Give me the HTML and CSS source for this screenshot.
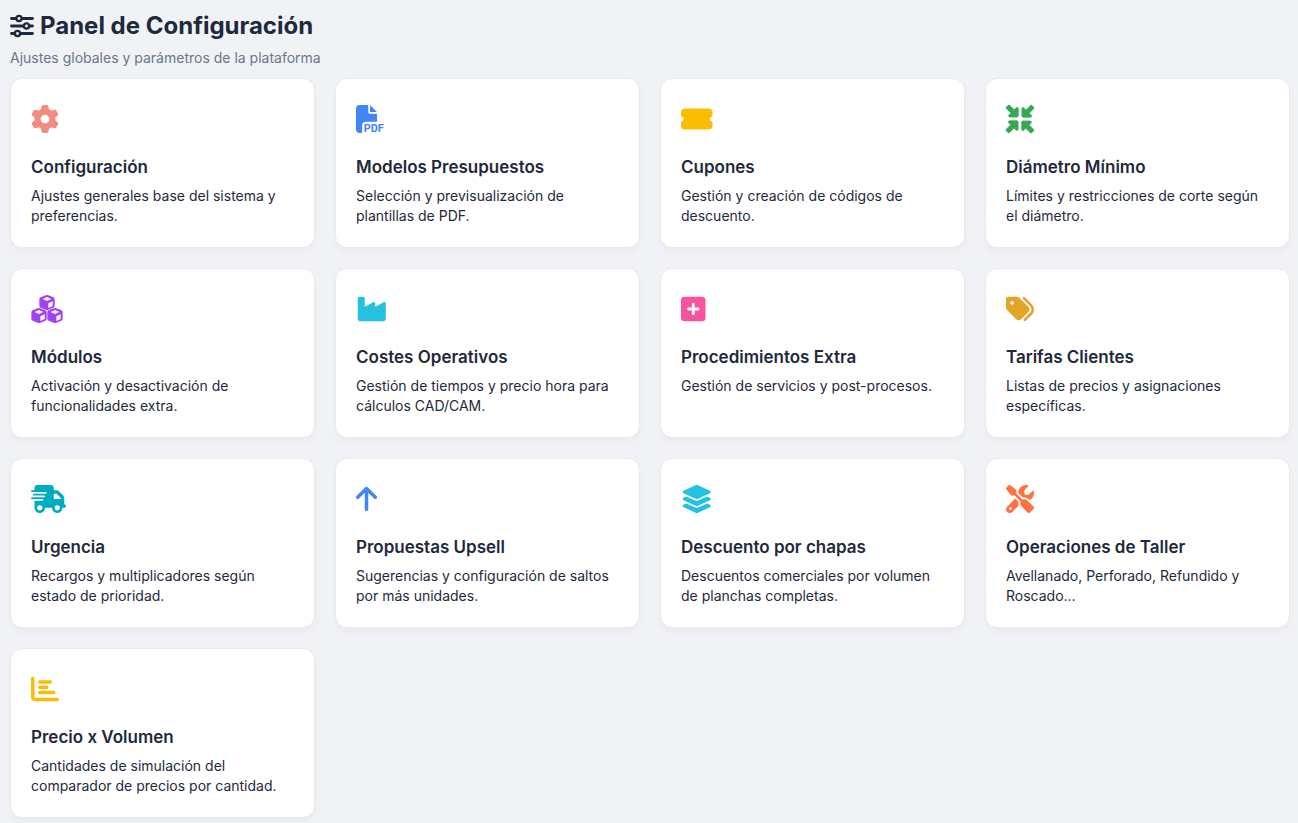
FILE: index.html
```html
<!DOCTYPE html>
<html lang="es">
<head>
<meta charset="utf-8">
<meta name="viewport" content="width=device-width, initial-scale=1">
<title>Panel de Configuración</title>
<link rel="stylesheet" href="styles.css">
</head>
<body>
<header class="page-header">
  <h1 class="page-title">
    <svg class="title-icon" viewBox="0 0 512 512" aria-hidden="true"><g fill="none" stroke="currentColor" stroke-linecap="round" stroke-width="60"><path d="M32 96h90M262 96h218M32 256h248M422 256h58M32 416h60M228 416h252"/><g stroke-width="50"><circle cx="192" cy="96" r="56"/><circle cx="352" cy="256" r="56"/><circle cx="160" cy="416" r="56"/></g></g></svg>
    <span>Panel de Configuración</span>
  </h1>
  <p class="page-subtitle">Ajustes globales y parámetros de la plataforma</p>
</header>
<main class="card-grid">
  <a class="card" href="#configuracion">
    <svg class="icon coral" viewBox="0 0 512 512" aria-hidden="true"><path d="M495.9 166.6c3.2 8.7 .5 18.4-6.4 24.6l-43.3 39.4c1.1 8.3 1.7 16.8 1.7 25.4s-.6 17.1-1.7 25.4l43.3 39.4c6.9 6.2 9.6 15.9 6.4 24.6c-4.4 11.9-9.7 23.3-15.8 34.3l-4.7 8.1c-6.6 11-14 21.4-22.1 31.2c-5.9 7.2-15.7 9.6-24.5 6.8l-55.7-17.7c-13.4 10.3-28.2 18.9-44 25.4l-12.5 57.1c-2 9.1-9 16.3-18.2 17.8c-13.8 2.3-28 3.5-42.5 3.5s-28.7-1.2-42.5-3.5c-9.2-1.5-16.2-8.7-18.2-17.8l-12.5-57.1c-15.8-6.5-30.6-15.1-44-25.4L83.1 425.9c-8.8 2.8-18.6 .3-24.5-6.8c-8.1-9.8-15.5-20.2-22.1-31.2l-4.7-8.1c-6.1-11-11.4-22.4-15.8-34.3c-3.2-8.7-.5-18.4 6.4-24.6l43.3-39.4C64.6 273.1 64 264.6 64 256s.6-17.1 1.7-25.4L22.4 191.2c-6.9-6.2-9.6-15.9-6.4-24.6c4.4-11.9 9.7-23.3 15.8-34.3l4.7-8.1c6.6-11 14-21.4 22.1-31.2c5.9-7.2 15.7-9.6 24.5-6.8l55.7 17.7c13.4-10.3 28.2-18.9 44-25.4l12.5-57.1c2-9.1 9-16.3 18.2-17.8C227.3 1.2 241.5 0 256 0s28.7 1.2 42.5 3.5c9.2 1.5 16.2 8.7 18.2 17.8l12.5 57.1c15.8 6.5 30.6 15.1 44 25.4l55.7-17.7c8.8-2.8 18.6-.3 24.5 6.8c8.1 9.8 15.5 20.2 22.1 31.2l4.7 8.1c6.1 11 11.4 22.4 15.8 34.3zM256 336a80 80 0 1 0 0-160 80 80 0 1 0 0 160z"/></svg>
    <h2 class="card-title">Configuración</h2>
    <p class="card-text">Ajustes generales base del sistema y preferencias.</p>
  </a>
  <a class="card" href="#modelos">
    <svg class="icon blue" viewBox="0 0 512 512" aria-hidden="true"><path d="M0 64C0 28.7 28.7 0 64 0H224V128c0 17.7 14.3 32 32 32H384V304H176c-35.3 0-64 28.7-64 64V512H64c-35.3 0-64-28.7-64-64V64zm384 64H256V0L384 128z"/><text class="pdf-label" x="140" y="498">PDF</text></svg>
    <h2 class="card-title">Modelos Presupuestos</h2>
    <p class="card-text">Selección y previsualización de plantillas de PDF.</p>
  </a>
  <a class="card" href="#cupones">
    <svg class="icon yellow" viewBox="0 0 576 512" aria-hidden="true"><path d="M0 128C0 92.7 28.7 64 64 64H512c35.3 0 64 28.7 64 64v64c0 8.8-7.4 15.7-15.7 18.6C541.5 217.1 528 235 528 256s13.5 38.9 32.3 45.4c8.3 2.9 15.7 9.8 15.7 18.6v64c0 35.3-28.7 64-64 64H64c-35.3 0-64-28.7-64-64V320c0-8.8 7.4-15.7 15.7-18.6C34.5 294.9 48 277 48 256s-13.5-38.9-32.3-45.4C7.4 207.7 0 200.8 0 192V128z"/></svg>
    <h2 class="card-title">Cupones</h2>
    <p class="card-text">Gestión y creación de códigos de descuento.</p>
  </a>
  <a class="card" href="#diametro">
    <svg class="icon green" viewBox="0 0 512 512" aria-hidden="true"><defs><path id="inward-arrow" stroke="currentColor" stroke-width="14" transform="translate(41 3) scale(.92)" d="M439 7c9.4-9.4 24.6-9.4 33.9 0l32 32c9.4 9.4 9.4 24.6 0 33.9l-87 87 40 40c6.9 6.9 8.9 17.2 5.2 26.2s-12.500 14.8-22.2 14.8H296c-13.3 0-24-10.7-24-24V72c0-9.7 5.8-18.5 14.8-22.2s19.3-1.7 26.2 5.2l40 40L439 7z"/></defs><use href="#inward-arrow"/><use href="#inward-arrow" transform="rotate(90 256 256)"/><use href="#inward-arrow" transform="rotate(180 256 256)"/><use href="#inward-arrow" transform="rotate(270 256 256)"/></svg>
    <h2 class="card-title">Diámetro Mínimo</h2>
    <p class="card-text">Límites y restricciones de corte según el diámetro.</p>
  </a>
  <a class="card" href="#modulos">
    <svg class="icon purple" viewBox="0 0 96 84" aria-hidden="true"><defs><path id="cube" fill-rule="evenodd" d="M20 1Q24 -1 28 1L43 7Q47 9 47 13V32Q47 36 43 38L28 44Q24 46 20 44L5 38Q1 36 1 32V13Q1 9 5 7ZM24 6L11 12L24 18L37 12ZM28 25V39L41 33V19Z"/></defs><use href="#cube" x="24"/><use href="#cube" y="39"/><use href="#cube" x="48" y="39"/></svg>
    <h2 class="card-title">Módulos</h2>
    <p class="card-text">Activación y desactivación de funcionalidades extra.</p>
  </a>
  <a class="card" href="#costes">
    <svg class="icon cyan" viewBox="-32 0 576 512" aria-hidden="true"><path d="M32 32C14.3 32 0 46.3 0 64V432c0 26.5 21.5 48 48 48H464c26.5 0 48-21.5 48-48V152.200c0-18.2-19.4-29.7-35.4-21.1L320 215.400V152.200c0-18.2-19.4-29.700-35.4-21.1L128 215.400V64c0-17.7-14.3-32-32-32H32z"/></svg>
    <h2 class="card-title">Costes Operativos</h2>
    <p class="card-text">Gestión de tiempos y precio hora para cálculos CAD/CAM.</p>
  </a>
  <a class="card" href="#procedimientos">
    <svg class="icon pink" viewBox="0 0 448 512" aria-hidden="true"><rect y="32" width="448" height="448" rx="64"/><path d="M136 256h176M224 168v176" stroke="#fff" stroke-width="52" stroke-linecap="round"/></svg>
    <h2 class="card-title">Procedimientos Extra</h2>
    <p class="card-text">Gestión de servicios y post-procesos.</p>
  </a>
  <a class="card" href="#tarifas">
    <svg class="icon amber" viewBox="0 0 512 512" aria-hidden="true"><path d="M345 39.1L472.8 168.4c52.4 53 52.4 138.2 0 191.2L360.8 472.9c-9.3 9.4-24.5 9.5-33.9 .2s-9.5-24.5-.2-33.9L438.6 325.9c33.9-34.3 33.9-89.4 0-123.7L310.9 72.9c-9.3-9.4-9.2-24.6 .2-33.9s24.6-9.2 33.9 .2zM0 229.5V80C0 53.5 21.5 32 48 32H197.5c17 0 33.3 6.700 45.3 18.7l168 168c25 25 25 65.500 0 90.5L277.3 442.700c-25 25-65.5 25-90.5 0l-168-168C6.7 262.7 0 246.5 0 229.5zM144 144a32 32 0 1 0 -64 0 32 32 0 1 0 64 0z"/></svg>
    <h2 class="card-title">Tarifas Clientes</h2>
    <p class="card-text">Listas de precios y asignaciones específicas.</p>
  </a>
  <a class="card" href="#urgencia">
    <svg class="icon teal" viewBox="0 0 640 512" aria-hidden="true"><path d="M112 0C85.5 0 64 21.5 64 48V96H16c-8.8 0-16 7.2-16 16s7.2 16 16 16H64 272c8.8 0 16 7.2 16 16s-7.2 16-16 16H64 48c-8.8 0-16 7.2-16 16s7.2 16 16 16H64 240c8.8 0 16 7.2 16 16s-7.2 16-16 16H64 16c-8.8 0-16 7.2-16 16s7.2 16 16 16H64 208c8.8 0 16 7.2 16 16s-7.2 16-16 16H64V416c0 53 43 96 96 96s96-43 96-96H384c0 53 43 96 96 96s96-43 96-96h32c17.7 0 32-14.3 32-32s-14.3-32-32-32V288 256 237.3c0-17-6.7-33.3-18.7-45.3L512 114.7c-12-12-28.3-18.7-45.3-18.7H416V48c0-26.5-21.5-48-48-48H112zM544 237.3V256H416V160h50.7L544 237.3zM160 368a48 48 0 1 1 0 96 48 48 0 1 1 0-96zm272 48a48 48 0 1 1 96 0 48 48 0 1 1 -96 0z"/></svg>
    <h2 class="card-title">Urgencia</h2>
    <p class="card-text">Recargos y multiplicadores según estado de prioridad.</p>
  </a>
  <a class="card" href="#upsell">
    <svg class="icon blue" viewBox="0 0 384 512" aria-hidden="true"><path d="M214.6 41.4c-12.5-12.5-32.8-12.5-45.3 0l-160 160c-12.5 12.5-12.5 32.8 0 45.3s32.8 12.5 45.3 0L160 141.2V448c0 17.7 14.3 32 32 32s32-14.3 32-32V141.2L329.4 246.6c12.5 12.5 32.8 12.5 45.3 0s12.5-32.8 0-45.3l-160-160z"/></svg>
    <h2 class="card-title">Propuestas Upsell</h2>
    <p class="card-text">Sugerencias y configuración de saltos por más unidades.</p>
  </a>
  <a class="card" href="#chapas">
    <svg class="icon cyan" viewBox="0 0 576 512" aria-hidden="true"><path d="M264.5 5.2c14.9-6.9 32.1-6.9 47 0l218.6 101c8.5 3.9 13.9 12.4 13.9 21.8s-5.4 17.9-13.9 21.8l-218.6 101c-14.9 6.9-32.1 6.9-47 0L45.9 149.8C37.4 145.8 32 137.3 32 128s5.4-17.9 13.9-21.8L264.5 5.2zM476.9 209.6l53.2 24.6c8.5 3.9 13.9 12.4 13.9 21.8s-5.4 17.9-13.9 21.8l-218.6 101c-14.9 6.9-32.1 6.9-47 0L45.9 277.8C37.4 273.8 32 265.3 32 256s5.4-17.9 13.9-21.8l53.2-24.6 152 70.2c23.4 10.8 50.4 10.8 73.8 0l152-70.2zm-152 198.2l152-70.2 53.2 24.6c8.5 3.9 13.9 12.4 13.9 21.8s-5.4 17.9-13.9 21.8l-218.6 101c-14.9 6.9-32.1 6.9-47 0L45.9 405.8C37.4 401.8 32 393.3 32 384s5.4-17.9 13.9-21.8l53.2-24.6 152 70.2c23.4 10.8 50.4 10.8 73.8 0z"/></svg>
    <h2 class="card-title">Descuento por chapas</h2>
    <p class="card-text">Descuentos comerciales por volumen de planchas completas.</p>
  </a>
  <a class="card" href="#taller">
    <svg class="icon orange" viewBox="0 0 512 512" aria-hidden="true"><path d="M78.6 5C69.1-2.4 55.6-1.5 47 7L7 47c-8.5 8.5-9.4 22-2.1 31.6l80 104c4.5 5.9 11.6 9.4 19 9.4h54.1l109 109c-14.7 29-10 65.4 14.3 89.6l112 112c12.5 12.5 32.8 12.5 45.3 0l64-64c12.5-12.5 12.5-32.8 0-45.3l-112-112c-24.2-24.2-60.6-29-89.6-14.3l-109-109V104c0-7.5-3.5-14.5-9.4-19L78.6 5zM19.9 396.1C7.2 408.8 0 426.1 0 444.1C0 481.6 30.4 512 67.9 512c18 0 35.3-7.2 48-19.9L233.7 374.3c-7.8-20.9-9-43.6-3.6-65.1l-61.7-61.7L19.9 396.1zM512 144c0-10.5-1.1-20.7-3.2-30.5c-2.4-11.2-16.1-14.1-24.2-6l-63.9 63.9c-3 3-7.1 4.7-11.3 4.7H352c-8.8 0-16-7.2-16-16V102.6c0-4.2 1.7-8.3 4.7-11.3l63.9-63.9c8.1-8.1 5.2-21.8-6-24.2C388.7 1.1 378.5 0 368 0C288.5 0 224 64.5 224 144l0 .8 85.3 85.3c36-9.1 75.8 .5 104 28.7L429 274.5c49-23 83-72.8 83-130.5zM56 432a24 24 0 1 1 48 0 24 24 0 1 1 -48 0z"/></svg>
    <h2 class="card-title">Operaciones de Taller</h2>
    <p class="card-text">Avellanado, Perforado, Refundido y Roscado...</p>
  </a>
  <a class="card" href="#volumen">
    <svg class="icon yellow" viewBox="0 0 512 512" aria-hidden="true"><path d="M32 64V400q0 48 48 48H480M160 128H352M160 224H288M160 320H416" fill="none" stroke="currentColor" stroke-width="64" stroke-linecap="round"/></svg>
    <h2 class="card-title">Precio x Volumen</h2>
    <p class="card-text">Cantidades de simulación del comparador de precios por cantidad.</p>
  </a>
</main>
</body>
</html>
```
FILE: styles.css
```css
* {
  box-sizing: border-box;
}

body {
  margin: 0;
  padding: 10px 8px 5px 10px;
  background: #f0f2f6;
  color: #1e293b;
  font-family: Inter, "Liberation Sans", sans-serif;
}

h1,
h2,
p {
  margin: 0;
}

.page-header {
  margin-bottom: 10px;
}

.page-title {
  display: flex;
  align-items: center;
  gap: 6px;
  font-size: 24px;
  line-height: 32px;
  font-weight: 700;
}

.title-icon {
  width: 24px;
  height: 24px;
}

.page-subtitle {
  margin-top: 6px;
  color: #6b7789;
  font-size: 14px;
  line-height: 20px;
}

.card-grid {
  display: grid;
  grid-template-columns: repeat(4, minmax(0, 1fr));
  gap: 20px;
}

.card {
  display: block;
  padding: 26px 20px 21px;
  border: 1px solid #e6e9ee;
  border-radius: 12px;
  background: #fff;
  box-shadow: 0 4px 6px rgba(0, 0, 0, 0.03);
  color: inherit;
  text-decoration: none;
}

.icon {
  display: block;
  height: 28px;
  margin-bottom: 22px;
  fill: currentColor;
  overflow: visible;
}

.card-title {
  margin-bottom: 7px;
  font-size: 17px;
  line-height: 24px;
  font-weight: 600;
}

.card-text {
  font-size: 14px;
  line-height: 20px;
}

.pdf-label {
  font-family: Roboto, sans-serif;
  font-size: 200px;
  font-weight: 700;
}

.coral { color: #f28b82; }
.blue { color: #4285f4; }
.yellow { color: #fbbc04; }
.green { color: #34a853; }
.purple { color: #a142f4; }
.cyan { color: #24c1e0; }
.pink { color: #f952a0; }
.amber { color: #e4a428; }
.teal { color: #00acc1; }
.orange { color: #ff7043; }

@media (max-width: 900px) {
  .card-grid {
    grid-template-columns: repeat(2, minmax(0, 1fr));
  }
}
```
